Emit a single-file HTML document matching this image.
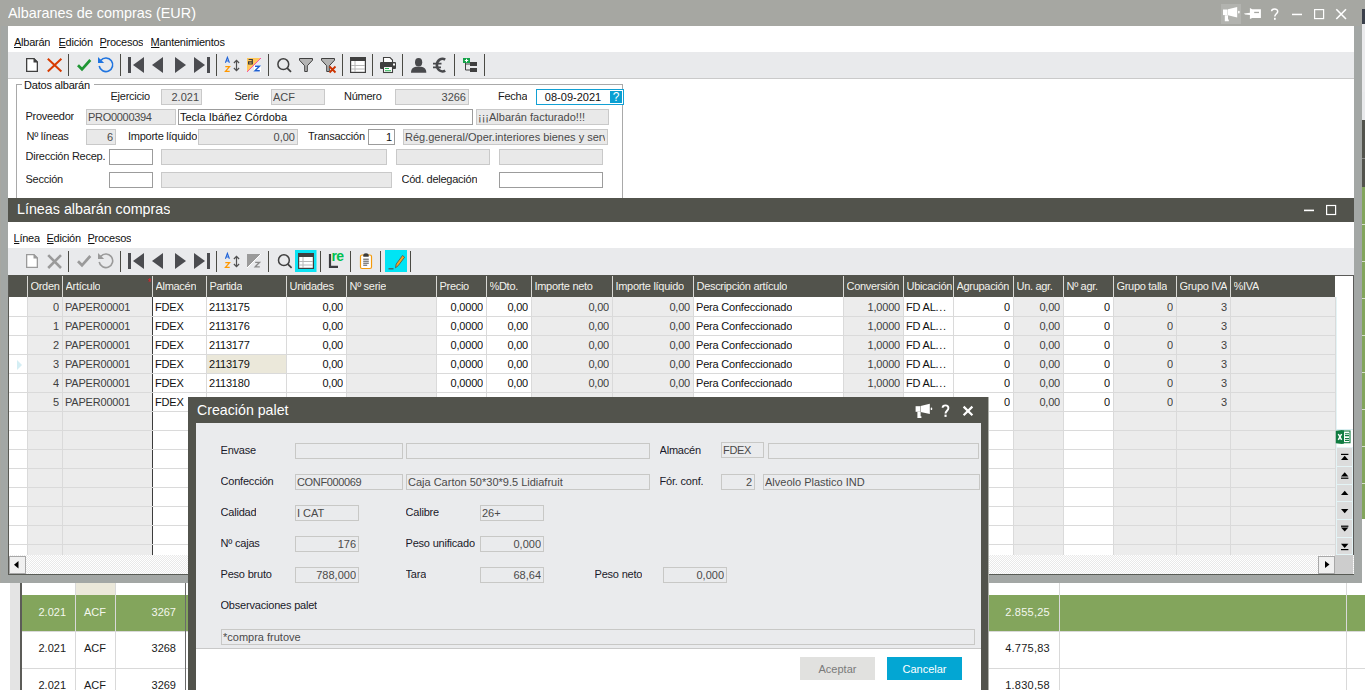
<!DOCTYPE html>
<html><head><meta charset="utf-8"><title>Albaranes de compras</title>
<style>
html,body{margin:0;padding:0;width:1365px;height:690px;overflow:hidden;background:#fff;}
body{position:relative;font-family:"Liberation Sans", sans-serif;}
body div, body svg{position:absolute;}
u{text-decoration:underline;text-underline-offset:1px;}
</style></head><body>
<div style="left:1362px;top:0px;width:3px;height:690px;background:#ffffff"></div>
<div style="left:1362px;top:0px;width:3px;height:9px;background:#a6a7a2"></div>
<div style="left:1362px;top:9px;width:3px;height:15px;background:#3b404b"></div>
<div style="left:1362px;top:24px;width:3px;height:68px;background:#ebebed"></div>
<div style="left:1362px;top:92px;width:3px;height:28px;background:#e9eaec"></div>
<div style="left:1362px;top:120px;width:3px;height:67px;background:#52534c"></div>
<div style="left:1362px;top:158px;width:3px;height:1px;background:#8a8a88"></div>
<div style="left:1362px;top:187px;width:3px;height:332px;background:#83a55c"></div>
<div style="left:1362px;top:224px;width:3px;height:1px;background:#d7dfcc"></div>
<div style="left:1362px;top:261px;width:3px;height:1px;background:#d7dfcc"></div>
<div style="left:1362px;top:298px;width:3px;height:1px;background:#d7dfcc"></div>
<div style="left:1362px;top:335px;width:3px;height:1px;background:#d7dfcc"></div>
<div style="left:1362px;top:372px;width:3px;height:1px;background:#d7dfcc"></div>
<div style="left:1362px;top:409px;width:3px;height:1px;background:#d7dfcc"></div>
<div style="left:1362px;top:446px;width:3px;height:1px;background:#d7dfcc"></div>
<div style="left:1362px;top:483px;width:3px;height:1px;background:#d7dfcc"></div>
<div style="left:0px;top:583px;width:1362px;height:107px;background:#ffffff"></div>
<div style="left:10px;top:582px;width:10px;height:108px;background:#e4e4e4"></div>
<div style="left:20px;top:582px;width:2px;height:108px;background:#5c5c58"></div>
<div style="left:75px;top:582px;width:40px;height:13px;background:#ebe8da"></div>
<div style="left:22px;top:595px;width:1343px;height:36px;background:#83a55c"></div>
<div style="left:22px;top:631px;width:1343px;height:1px;background:#d9d9d9"></div>
<div style="left:22px;top:668px;width:1343px;height:1px;background:#d9d9d9"></div>
<div style="left:75px;top:582px;width:1px;height:108px;background:#d9d9d9"></div>
<div style="left:115px;top:582px;width:1px;height:108px;background:#d9d9d9"></div>
<div style="left:1059px;top:582px;width:1px;height:108px;background:#d9d9d9"></div>
<div style="left:1346px;top:582px;width:1px;height:108px;background:#d9d9d9"></div>
<div style="left:185px;top:582px;width:1px;height:108px;background:#6a6a6a"></div>
<div style="left:22px;top:605.19px;width:44px;height:14px;line-height:14px;font-size:11px;color:#f4f7ee;text-align:right;white-space:nowrap;overflow:hidden;">2.021</div>
<div style="left:75px;top:605.19px;width:40px;height:14px;line-height:14px;font-size:11px;color:#f4f7ee;text-align:center;white-space:nowrap;overflow:hidden;">ACF</div>
<div style="left:115px;top:605.19px;width:61px;height:14px;line-height:14px;font-size:11px;color:#f4f7ee;text-align:right;white-space:nowrap;overflow:hidden;">3267</div>
<div style="left:989px;top:605.19px;width:61px;height:14px;line-height:14px;font-size:11px;color:#f4f7ee;text-align:right;white-space:nowrap;overflow:hidden;letter-spacing:0.25px;">2.855,25</div>
<div style="left:22px;top:641.19px;width:44px;height:14px;line-height:14px;font-size:11px;color:#1a1a1a;text-align:right;white-space:nowrap;overflow:hidden;">2.021</div>
<div style="left:75px;top:641.19px;width:40px;height:14px;line-height:14px;font-size:11px;color:#1a1a1a;text-align:center;white-space:nowrap;overflow:hidden;">ACF</div>
<div style="left:115px;top:641.19px;width:61px;height:14px;line-height:14px;font-size:11px;color:#1a1a1a;text-align:right;white-space:nowrap;overflow:hidden;">3268</div>
<div style="left:989px;top:641.19px;width:61px;height:14px;line-height:14px;font-size:11px;color:#1a1a1a;text-align:right;white-space:nowrap;overflow:hidden;letter-spacing:0.25px;">4.775,83</div>
<div style="left:22px;top:678.19px;width:44px;height:14px;line-height:14px;font-size:11px;color:#1a1a1a;text-align:right;white-space:nowrap;overflow:hidden;">2.021</div>
<div style="left:75px;top:678.19px;width:40px;height:14px;line-height:14px;font-size:11px;color:#1a1a1a;text-align:center;white-space:nowrap;overflow:hidden;">ACF</div>
<div style="left:115px;top:678.19px;width:61px;height:14px;line-height:14px;font-size:11px;color:#1a1a1a;text-align:right;white-space:nowrap;overflow:hidden;">3269</div>
<div style="left:989px;top:678.19px;width:61px;height:14px;line-height:14px;font-size:11px;color:#1a1a1a;text-align:right;white-space:nowrap;overflow:hidden;letter-spacing:0.25px;">1.830,58</div>
<div style="left:0px;top:0px;width:1362px;height:26px;background:#a6a7a2"></div>
<div style="left:0px;top:26px;width:1362px;height:557px;background:#a3a7a5"></div>
<div style="left:8px;top:26px;width:1346px;height:548px;background:#ffffff"></div>
<div style="left:0px;top:26px;width:1px;height:557px;background:#a6a7a2"></div>
<div style="left:8px;top:3.51px;white-space:nowrap;height:19px;line-height:19px;font-size:14.4px;color:#ffffff;text-align:left;white-space:nowrap;overflow:hidden;">Albaranes de compras (EUR)</div>
<div style="left:1221px;top:4px;width:20px;height:20px;background:#b2b3af"></div>
<div style="left:14px;top:35.19px;white-space:nowrap;height:14px;line-height:14px;font-size:11px;color:#101010;text-align:left;white-space:nowrap;overflow:hidden;letter-spacing:-0.25px;"><u>A</u>lbarán</div>
<div style="left:58.5px;top:35.19px;white-space:nowrap;height:14px;line-height:14px;font-size:11px;color:#101010;text-align:left;white-space:nowrap;overflow:hidden;letter-spacing:-0.25px;"><u>E</u>dición</div>
<div style="left:99.5px;top:35.19px;white-space:nowrap;height:14px;line-height:14px;font-size:11px;color:#101010;text-align:left;white-space:nowrap;overflow:hidden;letter-spacing:-0.25px;"><u>P</u>rocesos</div>
<div style="left:150.5px;top:35.19px;white-space:nowrap;height:14px;line-height:14px;font-size:11px;color:#101010;text-align:left;white-space:nowrap;overflow:hidden;letter-spacing:-0.25px;"><u>M</u>antenimientos</div>
<div style="left:8px;top:52px;width:1346px;height:26px;background:#e9eaec"></div>
<div style="left:8px;top:78px;width:1346px;height:1px;background:#cacaca"></div>
<div style="left:68px;top:54px;width:1px;height:22px;background:#4a4a44"></div>
<div style="left:120px;top:54px;width:1px;height:22px;background:#4a4a44"></div>
<div style="left:216px;top:54px;width:1px;height:22px;background:#4a4a44"></div>
<div style="left:268px;top:54px;width:1px;height:22px;background:#4a4a44"></div>
<div style="left:342px;top:54px;width:1px;height:22px;background:#4a4a44"></div>
<div style="left:372px;top:54px;width:1px;height:22px;background:#4a4a44"></div>
<div style="left:402px;top:54px;width:1px;height:22px;background:#4a4a44"></div>
<div style="left:454px;top:54px;width:1px;height:22px;background:#4a4a44"></div>
<div style="left:484px;top:54px;width:1px;height:22px;background:#4a4a44"></div>
<div style="left:16px;top:84px;width:605px;height:120px;border:1px solid #a9a9a9;border-bottom:none"></div>
<div style="left:22px;top:79px;width:72px;height:12px;background:#ffffff"></div>
<div style="left:24px;top:77.89px;white-space:nowrap;height:14px;line-height:14px;font-size:11px;color:#101010;text-align:left;white-space:nowrap;overflow:hidden;letter-spacing:-0.2px;">Datos albarán</div>
<div style="left:110.5px;top:89.19px;white-space:nowrap;height:14px;line-height:14px;font-size:11px;color:#1a1a1a;text-align:left;white-space:nowrap;overflow:hidden;letter-spacing:-0.25px;">Ejercicio</div>
<div style="left:161px;top:89px;width:41px;height:16px;background:#e9e9e9;border:1px solid #c9c9c9;box-sizing:border-box"></div>
<div style="left:163px;top:90.39px;width:36px;height:14px;line-height:14px;font-size:11px;color:#4a4a4a;text-align:right;white-space:nowrap;overflow:hidden;letter-spacing:0px;">2.021</div>
<div style="left:234.5px;top:89.19px;white-space:nowrap;height:14px;line-height:14px;font-size:11px;color:#1a1a1a;text-align:left;white-space:nowrap;overflow:hidden;letter-spacing:-0.25px;">Serie</div>
<div style="left:271px;top:89px;width:54px;height:16px;background:#e9e9e9;border:1px solid #c9c9c9;box-sizing:border-box"></div>
<div style="left:273px;top:90.39px;width:49px;height:14px;line-height:14px;font-size:11px;color:#4a4a4a;text-align:left;white-space:nowrap;overflow:hidden;letter-spacing:0px;">ACF</div>
<div style="left:344px;top:89.19px;white-space:nowrap;height:14px;line-height:14px;font-size:11px;color:#1a1a1a;text-align:left;white-space:nowrap;overflow:hidden;letter-spacing:-0.25px;">Número</div>
<div style="left:395px;top:89px;width:74px;height:16px;background:#e9e9e9;border:1px solid #c9c9c9;box-sizing:border-box"></div>
<div style="left:397px;top:90.39px;width:69px;height:14px;line-height:14px;font-size:11px;color:#4a4a4a;text-align:right;white-space:nowrap;overflow:hidden;letter-spacing:0px;">3266</div>
<div style="left:498px;top:89.19px;white-space:nowrap;height:14px;line-height:14px;font-size:11px;color:#1a1a1a;text-align:left;white-space:nowrap;overflow:hidden;letter-spacing:-0.25px;">Fecha</div>
<div style="left:536px;top:89px;width:88px;height:16px;background:#ffffff;border:1px solid #12a0d4;box-sizing:border-box"></div>
<div style="left:536px;top:89.59px;width:74px;height:14px;line-height:14px;font-size:11px;color:#101010;text-align:center;white-space:nowrap;overflow:hidden;letter-spacing:0px;">08-09-2021</div>
<div style="left:610px;top:91px;width:12px;height:12px;background:#0a9fd2"></div>
<div style="left:610px;top:88.84px;width:12px;height:16px;line-height:16px;font-size:12px;color:#ffffff;text-align:center;white-space:nowrap;overflow:hidden;">?</div>
<div style="left:25.5px;top:109.19px;white-space:nowrap;height:14px;line-height:14px;font-size:11px;color:#1a1a1a;text-align:left;white-space:nowrap;overflow:hidden;letter-spacing:-0.25px;">Proveedor</div>
<div style="left:86px;top:109px;width:90px;height:16px;background:#e9e9e9;border:1px solid #c9c9c9;box-sizing:border-box"></div>
<div style="left:88px;top:110.39px;width:85px;height:14px;line-height:14px;font-size:11px;color:#4a4a4a;text-align:left;white-space:nowrap;overflow:hidden;letter-spacing:-0.3px;">PRO0000394</div>
<div style="left:178px;top:109px;width:295px;height:16px;background:#ffffff;border:1px solid #9c9c9c;box-sizing:border-box"></div>
<div style="left:180px;top:110.39px;width:290px;height:14px;line-height:14px;font-size:11px;color:#101010;text-align:left;white-space:nowrap;overflow:hidden;letter-spacing:0px;">Tecla Ibáñez Córdoba</div>
<div style="left:476px;top:109px;width:133px;height:16px;background:#e9e9e9;border:1px solid #c9c9c9;box-sizing:border-box"></div>
<div style="left:478px;top:110.39px;width:128px;height:14px;line-height:14px;font-size:11px;color:#4a4a4a;text-align:left;white-space:nowrap;overflow:hidden;letter-spacing:0px;">¡¡¡Albarán facturado!!!</div>
<div style="left:26.5px;top:129.19px;white-space:nowrap;height:14px;line-height:14px;font-size:11px;color:#1a1a1a;text-align:left;white-space:nowrap;overflow:hidden;letter-spacing:-0.25px;">Nº líneas</div>
<div style="left:86px;top:129px;width:30px;height:16px;background:#e9e9e9;border:1px solid #c9c9c9;box-sizing:border-box"></div>
<div style="left:88px;top:130.39px;width:25px;height:14px;line-height:14px;font-size:11px;color:#4a4a4a;text-align:right;white-space:nowrap;overflow:hidden;letter-spacing:0px;">6</div>
<div style="left:128px;top:129.19px;white-space:nowrap;height:14px;line-height:14px;font-size:11px;color:#1a1a1a;text-align:left;white-space:nowrap;overflow:hidden;letter-spacing:-0.25px;">Importe líquido</div>
<div style="left:198px;top:129px;width:100px;height:16px;background:#e9e9e9;border:1px solid #c9c9c9;box-sizing:border-box"></div>
<div style="left:200px;top:130.39px;width:95px;height:14px;line-height:14px;font-size:11px;color:#4a4a4a;text-align:right;white-space:nowrap;overflow:hidden;letter-spacing:0px;">0,00</div>
<div style="left:308px;top:129.19px;white-space:nowrap;height:14px;line-height:14px;font-size:11px;color:#1a1a1a;text-align:left;white-space:nowrap;overflow:hidden;letter-spacing:-0.25px;">Transacción</div>
<div style="left:368px;top:129px;width:27px;height:16px;background:#ffffff;border:1px solid #9c9c9c;box-sizing:border-box"></div>
<div style="left:370px;top:130.39px;width:22px;height:14px;line-height:14px;font-size:11px;color:#101010;text-align:right;white-space:nowrap;overflow:hidden;letter-spacing:0px;">1</div>
<div style="left:403px;top:129px;width:205px;height:16px;background:#e9e9e9;border:1px solid #c9c9c9;box-sizing:border-box"></div>
<div style="left:405px;top:130.39px;width:200px;height:14px;line-height:14px;font-size:11px;color:#4a4a4a;text-align:left;white-space:nowrap;overflow:hidden;letter-spacing:0px;">Rég.general/Oper.interiores bienes y serv</div>
<div style="left:25.5px;top:149.19px;white-space:nowrap;height:14px;line-height:14px;font-size:11px;color:#1a1a1a;text-align:left;white-space:nowrap;overflow:hidden;letter-spacing:-0.25px;">Dirección Recep.</div>
<div style="left:109px;top:149px;width:44px;height:16px;background:#ffffff;border:1px solid #9c9c9c;box-sizing:border-box"></div>
<div style="left:161px;top:149px;width:226px;height:16px;background:#e9e9e9;border:1px solid #c9c9c9;box-sizing:border-box"></div>
<div style="left:396px;top:149px;width:94px;height:16px;background:#e9e9e9;border:1px solid #c9c9c9;box-sizing:border-box"></div>
<div style="left:499px;top:149px;width:104px;height:16px;background:#e9e9e9;border:1px solid #c9c9c9;box-sizing:border-box"></div>
<div style="left:25.5px;top:172.19px;white-space:nowrap;height:14px;line-height:14px;font-size:11px;color:#1a1a1a;text-align:left;white-space:nowrap;overflow:hidden;letter-spacing:-0.25px;">Sección</div>
<div style="left:109px;top:172px;width:44px;height:16px;background:#ffffff;border:1px solid #9c9c9c;box-sizing:border-box"></div>
<div style="left:161px;top:172px;width:231px;height:16px;background:#e9e9e9;border:1px solid #c9c9c9;box-sizing:border-box"></div>
<div style="left:401.5px;top:172.19px;white-space:nowrap;height:14px;line-height:14px;font-size:11px;color:#1a1a1a;text-align:left;white-space:nowrap;overflow:hidden;letter-spacing:-0.25px;">Cód. delegación</div>
<div style="left:499px;top:172px;width:104px;height:16px;background:#ffffff;border:1px solid #9c9c9c;box-sizing:border-box"></div>
<div style="left:8px;top:198px;width:1346px;height:24px;background:#52534c"></div>
<div style="left:17px;top:199.75px;white-space:nowrap;height:19px;line-height:19px;font-size:14.3px;color:#ffffff;text-align:left;white-space:nowrap;overflow:hidden;">Líneas albarán compras</div>
<div style="left:13.5px;top:230.69px;white-space:nowrap;height:14px;line-height:14px;font-size:11px;color:#101010;text-align:left;white-space:nowrap;overflow:hidden;letter-spacing:-0.25px;"><u>L</u>ínea</div>
<div style="left:46.5px;top:230.69px;white-space:nowrap;height:14px;line-height:14px;font-size:11px;color:#101010;text-align:left;white-space:nowrap;overflow:hidden;letter-spacing:-0.25px;"><u>E</u>dición</div>
<div style="left:87.5px;top:230.69px;white-space:nowrap;height:14px;line-height:14px;font-size:11px;color:#101010;text-align:left;white-space:nowrap;overflow:hidden;letter-spacing:-0.25px;"><u>P</u>rocesos</div>
<div style="left:8px;top:248px;width:1346px;height:27px;background:#e9eaec"></div>
<div style="left:68px;top:251px;width:1px;height:21px;background:#4a4a44"></div>
<div style="left:120px;top:251px;width:1px;height:21px;background:#4a4a44"></div>
<div style="left:216px;top:251px;width:1px;height:21px;background:#4a4a44"></div>
<div style="left:268px;top:251px;width:1px;height:21px;background:#4a4a44"></div>
<div style="left:320px;top:251px;width:1px;height:21px;background:#4a4a44"></div>
<div style="left:350px;top:251px;width:1px;height:21px;background:#4a4a44"></div>
<div style="left:380px;top:251px;width:1px;height:21px;background:#4a4a44"></div>
<div style="left:410px;top:251px;width:1px;height:21px;background:#4a4a44"></div>
<div style="left:8px;top:275px;width:1327px;height:22px;background:#52534c"></div>
<div style="left:28px;top:297px;width:35px;height:258px;background:#ececec"></div>
<div style="left:27px;top:276px;width:1px;height:21px;background:#d8d8d4"></div>
<div style="left:27px;top:297px;width:1px;height:258px;background:#dadada"></div>
<div style="left:30.5px;top:279.19px;white-space:nowrap;height:14px;line-height:14px;font-size:11px;color:#f2f2ec;text-align:left;white-space:nowrap;overflow:hidden;letter-spacing:-0.3px;">Orden</div>
<div style="left:63px;top:297px;width:90px;height:258px;background:#ececec"></div>
<div style="left:62px;top:276px;width:1px;height:21px;background:#d8d8d4"></div>
<div style="left:62px;top:297px;width:1px;height:258px;background:#dadada"></div>
<div style="left:65.5px;top:279.19px;white-space:nowrap;height:14px;line-height:14px;font-size:11px;color:#f2f2ec;text-align:left;white-space:nowrap;overflow:hidden;letter-spacing:-0.3px;">Artículo</div>
<div style="left:152px;top:276px;width:1px;height:21px;background:#d8d8d4"></div>
<div style="left:152px;top:297px;width:1px;height:258px;background:#dadada"></div>
<div style="left:155.5px;top:279.19px;white-space:nowrap;height:14px;line-height:14px;font-size:11px;color:#f2f2ec;text-align:left;white-space:nowrap;overflow:hidden;letter-spacing:-0.3px;">Almacén</div>
<div style="left:206px;top:276px;width:1px;height:21px;background:#d8d8d4"></div>
<div style="left:206px;top:297px;width:1px;height:258px;background:#dadada"></div>
<div style="left:209.5px;top:279.19px;white-space:nowrap;height:14px;line-height:14px;font-size:11px;color:#f2f2ec;text-align:left;white-space:nowrap;overflow:hidden;letter-spacing:-0.3px;">Partida</div>
<div style="left:286px;top:276px;width:1px;height:21px;background:#d8d8d4"></div>
<div style="left:286px;top:297px;width:1px;height:258px;background:#dadada"></div>
<div style="left:289.5px;top:279.19px;white-space:nowrap;height:14px;line-height:14px;font-size:11px;color:#f2f2ec;text-align:left;white-space:nowrap;overflow:hidden;letter-spacing:-0.3px;">Unidades</div>
<div style="left:347px;top:297px;width:90px;height:258px;background:#ececec"></div>
<div style="left:346px;top:276px;width:1px;height:21px;background:#d8d8d4"></div>
<div style="left:346px;top:297px;width:1px;height:258px;background:#dadada"></div>
<div style="left:349.5px;top:279.19px;white-space:nowrap;height:14px;line-height:14px;font-size:11px;color:#f2f2ec;text-align:left;white-space:nowrap;overflow:hidden;letter-spacing:-0.3px;">Nº serie</div>
<div style="left:436px;top:276px;width:1px;height:21px;background:#d8d8d4"></div>
<div style="left:436px;top:297px;width:1px;height:258px;background:#dadada"></div>
<div style="left:439.5px;top:279.19px;white-space:nowrap;height:14px;line-height:14px;font-size:11px;color:#f2f2ec;text-align:left;white-space:nowrap;overflow:hidden;letter-spacing:-0.3px;">Precio</div>
<div style="left:486px;top:276px;width:1px;height:21px;background:#d8d8d4"></div>
<div style="left:486px;top:297px;width:1px;height:258px;background:#dadada"></div>
<div style="left:489.5px;top:279.19px;white-space:nowrap;height:14px;line-height:14px;font-size:11px;color:#f2f2ec;text-align:left;white-space:nowrap;overflow:hidden;letter-spacing:-0.3px;">%Dto.</div>
<div style="left:532px;top:297px;width:81px;height:258px;background:#ececec"></div>
<div style="left:531px;top:276px;width:1px;height:21px;background:#d8d8d4"></div>
<div style="left:531px;top:297px;width:1px;height:258px;background:#dadada"></div>
<div style="left:534.5px;top:279.19px;white-space:nowrap;height:14px;line-height:14px;font-size:11px;color:#f2f2ec;text-align:left;white-space:nowrap;overflow:hidden;letter-spacing:-0.3px;">Importe neto</div>
<div style="left:613px;top:297px;width:81px;height:258px;background:#ececec"></div>
<div style="left:612px;top:276px;width:1px;height:21px;background:#d8d8d4"></div>
<div style="left:612px;top:297px;width:1px;height:258px;background:#dadada"></div>
<div style="left:615.5px;top:279.19px;white-space:nowrap;height:14px;line-height:14px;font-size:11px;color:#f2f2ec;text-align:left;white-space:nowrap;overflow:hidden;letter-spacing:-0.3px;">Importe líquido</div>
<div style="left:693px;top:276px;width:1px;height:21px;background:#d8d8d4"></div>
<div style="left:693px;top:297px;width:1px;height:258px;background:#dadada"></div>
<div style="left:696.5px;top:279.19px;white-space:nowrap;height:14px;line-height:14px;font-size:11px;color:#f2f2ec;text-align:left;white-space:nowrap;overflow:hidden;letter-spacing:-0.3px;">Descripción artículo</div>
<div style="left:844px;top:297px;width:60px;height:258px;background:#ececec"></div>
<div style="left:843px;top:276px;width:1px;height:21px;background:#d8d8d4"></div>
<div style="left:843px;top:297px;width:1px;height:258px;background:#dadada"></div>
<div style="left:846.5px;top:279.19px;white-space:nowrap;height:14px;line-height:14px;font-size:11px;color:#f2f2ec;text-align:left;white-space:nowrap;overflow:hidden;letter-spacing:-0.3px;">Conversión</div>
<div style="left:903px;top:276px;width:1px;height:21px;background:#d8d8d4"></div>
<div style="left:903px;top:297px;width:1px;height:258px;background:#dadada"></div>
<div style="left:906.5px;top:279.19px;white-space:nowrap;height:14px;line-height:14px;font-size:11px;color:#f2f2ec;text-align:left;white-space:nowrap;overflow:hidden;letter-spacing:-0.3px;">Ubicación</div>
<div style="left:953px;top:276px;width:1px;height:21px;background:#d8d8d4"></div>
<div style="left:953px;top:297px;width:1px;height:258px;background:#dadada"></div>
<div style="left:956.5px;top:279.19px;white-space:nowrap;height:14px;line-height:14px;font-size:11px;color:#f2f2ec;text-align:left;white-space:nowrap;overflow:hidden;letter-spacing:-0.3px;">Agrupación</div>
<div style="left:1014px;top:297px;width:50px;height:258px;background:#ececec"></div>
<div style="left:1013px;top:276px;width:1px;height:21px;background:#d8d8d4"></div>
<div style="left:1013px;top:297px;width:1px;height:258px;background:#dadada"></div>
<div style="left:1016.5px;top:279.19px;white-space:nowrap;height:14px;line-height:14px;font-size:11px;color:#f2f2ec;text-align:left;white-space:nowrap;overflow:hidden;letter-spacing:-0.3px;">Un. agr.</div>
<div style="left:1063px;top:276px;width:1px;height:21px;background:#d8d8d4"></div>
<div style="left:1063px;top:297px;width:1px;height:258px;background:#dadada"></div>
<div style="left:1066.5px;top:279.19px;white-space:nowrap;height:14px;line-height:14px;font-size:11px;color:#f2f2ec;text-align:left;white-space:nowrap;overflow:hidden;letter-spacing:-0.3px;">Nº agr.</div>
<div style="left:1114px;top:297px;width:63px;height:258px;background:#ececec"></div>
<div style="left:1113px;top:276px;width:1px;height:21px;background:#d8d8d4"></div>
<div style="left:1113px;top:297px;width:1px;height:258px;background:#dadada"></div>
<div style="left:1116.5px;top:279.19px;white-space:nowrap;height:14px;line-height:14px;font-size:11px;color:#f2f2ec;text-align:left;white-space:nowrap;overflow:hidden;letter-spacing:-0.3px;">Grupo talla</div>
<div style="left:1177px;top:297px;width:54px;height:258px;background:#ececec"></div>
<div style="left:1176px;top:276px;width:1px;height:21px;background:#d8d8d4"></div>
<div style="left:1176px;top:297px;width:1px;height:258px;background:#dadada"></div>
<div style="left:1179.5px;top:279.19px;white-space:nowrap;height:14px;line-height:14px;font-size:11px;color:#f2f2ec;text-align:left;white-space:nowrap;overflow:hidden;letter-spacing:-0.3px;">Grupo IVA</div>
<div style="left:1231px;top:297px;width:105px;height:258px;background:#ececec"></div>
<div style="left:1230px;top:276px;width:1px;height:21px;background:#d8d8d4"></div>
<div style="left:1230px;top:297px;width:1px;height:258px;background:#dadada"></div>
<div style="left:1233.5px;top:279.19px;white-space:nowrap;height:14px;line-height:14px;font-size:11px;color:#f2f2ec;text-align:left;white-space:nowrap;overflow:hidden;letter-spacing:-0.3px;">%IVA</div>
<div style="left:152px;top:297px;width:1px;height:258px;background:#3c3c3c"></div>
<div style="left:147.5px;top:275.54px;white-space:nowrap;height:13px;line-height:13px;font-size:10px;color:#e0202a;text-align:left;white-space:nowrap;overflow:hidden;">*</div>
<div style="left:1335px;top:297px;width:1px;height:258px;background:#dadada"></div>
<div style="left:8px;top:316px;width:1327px;height:1px;background:#dadada"></div>
<div style="left:8px;top:335px;width:1327px;height:1px;background:#dadada"></div>
<div style="left:8px;top:354px;width:1327px;height:1px;background:#dadada"></div>
<div style="left:8px;top:373px;width:1327px;height:1px;background:#dadada"></div>
<div style="left:8px;top:392px;width:1327px;height:1px;background:#dadada"></div>
<div style="left:8px;top:411px;width:1327px;height:1px;background:#dadada"></div>
<div style="left:8px;top:430px;width:1327px;height:1px;background:#dadada"></div>
<div style="left:8px;top:449px;width:1327px;height:1px;background:#dadada"></div>
<div style="left:8px;top:468px;width:1327px;height:1px;background:#dadada"></div>
<div style="left:8px;top:487px;width:1327px;height:1px;background:#dadada"></div>
<div style="left:8px;top:506px;width:1327px;height:1px;background:#dadada"></div>
<div style="left:8px;top:525px;width:1327px;height:1px;background:#dadada"></div>
<div style="left:8px;top:544px;width:1327px;height:1px;background:#dadada"></div>
<div style="left:8px;top:563px;width:1327px;height:1px;background:#dadada"></div>
<div style="left:207px;top:355px;width:79px;height:18px;background:#ebe8da"></div>
<svg style="left:17px;top:360px" width="6" height="10"><path d="M0 0 L5 5 L0 10Z" fill="#d4eef4"/></svg>
<div style="left:28px;top:300.19px;width:31px;height:14px;line-height:14px;font-size:11px;color:#404040;text-align:right;white-space:nowrap;overflow:hidden;letter-spacing:-0.2px;">0</div>
<div style="left:65px;top:300.19px;white-space:nowrap;height:14px;line-height:14px;font-size:11px;color:#404040;text-align:left;white-space:nowrap;overflow:hidden;letter-spacing:-0.2px;">PAPER00001</div>
<div style="left:155px;top:300.19px;white-space:nowrap;height:14px;line-height:14px;font-size:11px;color:#101010;text-align:left;white-space:nowrap;overflow:hidden;letter-spacing:-0.2px;">FDEX</div>
<div style="left:209px;top:300.19px;white-space:nowrap;height:14px;line-height:14px;font-size:11px;color:#101010;text-align:left;white-space:nowrap;overflow:hidden;letter-spacing:-0.2px;">2113175</div>
<div style="left:287px;top:300.19px;width:56px;height:14px;line-height:14px;font-size:11px;color:#101010;text-align:right;white-space:nowrap;overflow:hidden;letter-spacing:-0.2px;">0,00</div>
<div style="left:437px;top:300.19px;width:46px;height:14px;line-height:14px;font-size:11px;color:#101010;text-align:right;white-space:nowrap;overflow:hidden;letter-spacing:-0.2px;">0,0000</div>
<div style="left:487px;top:300.19px;width:41px;height:14px;line-height:14px;font-size:11px;color:#101010;text-align:right;white-space:nowrap;overflow:hidden;letter-spacing:-0.2px;">0,00</div>
<div style="left:532px;top:300.19px;width:77px;height:14px;line-height:14px;font-size:11px;color:#404040;text-align:right;white-space:nowrap;overflow:hidden;letter-spacing:-0.2px;">0,00</div>
<div style="left:613px;top:300.19px;width:77px;height:14px;line-height:14px;font-size:11px;color:#404040;text-align:right;white-space:nowrap;overflow:hidden;letter-spacing:-0.2px;">0,00</div>
<div style="left:696px;top:300.19px;white-space:nowrap;height:14px;line-height:14px;font-size:11px;color:#101010;text-align:left;white-space:nowrap;overflow:hidden;letter-spacing:-0.2px;">Pera Confeccionado</div>
<div style="left:844px;top:300.19px;width:56px;height:14px;line-height:14px;font-size:11px;color:#404040;text-align:right;white-space:nowrap;overflow:hidden;letter-spacing:-0.2px;">1,0000</div>
<div style="left:906px;top:300.19px;white-space:nowrap;height:14px;line-height:14px;font-size:11px;color:#101010;text-align:left;white-space:nowrap;overflow:hidden;letter-spacing:-0.2px;">FD AL<span style="letter-spacing:0.6px">...</span></div>
<div style="left:954px;top:300.19px;width:56px;height:14px;line-height:14px;font-size:11px;color:#101010;text-align:right;white-space:nowrap;overflow:hidden;letter-spacing:-0.2px;">0</div>
<div style="left:1014px;top:300.19px;width:46px;height:14px;line-height:14px;font-size:11px;color:#404040;text-align:right;white-space:nowrap;overflow:hidden;letter-spacing:-0.2px;">0,00</div>
<div style="left:1064px;top:300.19px;width:46px;height:14px;line-height:14px;font-size:11px;color:#101010;text-align:right;white-space:nowrap;overflow:hidden;letter-spacing:-0.2px;">0</div>
<div style="left:1114px;top:300.19px;width:59px;height:14px;line-height:14px;font-size:11px;color:#404040;text-align:right;white-space:nowrap;overflow:hidden;letter-spacing:-0.2px;">0</div>
<div style="left:1177px;top:300.19px;width:50px;height:14px;line-height:14px;font-size:11px;color:#404040;text-align:right;white-space:nowrap;overflow:hidden;letter-spacing:-0.2px;">3</div>
<div style="left:28px;top:319.19px;width:31px;height:14px;line-height:14px;font-size:11px;color:#404040;text-align:right;white-space:nowrap;overflow:hidden;letter-spacing:-0.2px;">1</div>
<div style="left:65px;top:319.19px;white-space:nowrap;height:14px;line-height:14px;font-size:11px;color:#404040;text-align:left;white-space:nowrap;overflow:hidden;letter-spacing:-0.2px;">PAPER00001</div>
<div style="left:155px;top:319.19px;white-space:nowrap;height:14px;line-height:14px;font-size:11px;color:#101010;text-align:left;white-space:nowrap;overflow:hidden;letter-spacing:-0.2px;">FDEX</div>
<div style="left:209px;top:319.19px;white-space:nowrap;height:14px;line-height:14px;font-size:11px;color:#101010;text-align:left;white-space:nowrap;overflow:hidden;letter-spacing:-0.2px;">2113176</div>
<div style="left:287px;top:319.19px;width:56px;height:14px;line-height:14px;font-size:11px;color:#101010;text-align:right;white-space:nowrap;overflow:hidden;letter-spacing:-0.2px;">0,00</div>
<div style="left:437px;top:319.19px;width:46px;height:14px;line-height:14px;font-size:11px;color:#101010;text-align:right;white-space:nowrap;overflow:hidden;letter-spacing:-0.2px;">0,0000</div>
<div style="left:487px;top:319.19px;width:41px;height:14px;line-height:14px;font-size:11px;color:#101010;text-align:right;white-space:nowrap;overflow:hidden;letter-spacing:-0.2px;">0,00</div>
<div style="left:532px;top:319.19px;width:77px;height:14px;line-height:14px;font-size:11px;color:#404040;text-align:right;white-space:nowrap;overflow:hidden;letter-spacing:-0.2px;">0,00</div>
<div style="left:613px;top:319.19px;width:77px;height:14px;line-height:14px;font-size:11px;color:#404040;text-align:right;white-space:nowrap;overflow:hidden;letter-spacing:-0.2px;">0,00</div>
<div style="left:696px;top:319.19px;white-space:nowrap;height:14px;line-height:14px;font-size:11px;color:#101010;text-align:left;white-space:nowrap;overflow:hidden;letter-spacing:-0.2px;">Pera Confeccionado</div>
<div style="left:844px;top:319.19px;width:56px;height:14px;line-height:14px;font-size:11px;color:#404040;text-align:right;white-space:nowrap;overflow:hidden;letter-spacing:-0.2px;">1,0000</div>
<div style="left:906px;top:319.19px;white-space:nowrap;height:14px;line-height:14px;font-size:11px;color:#101010;text-align:left;white-space:nowrap;overflow:hidden;letter-spacing:-0.2px;">FD AL<span style="letter-spacing:0.6px">...</span></div>
<div style="left:954px;top:319.19px;width:56px;height:14px;line-height:14px;font-size:11px;color:#101010;text-align:right;white-space:nowrap;overflow:hidden;letter-spacing:-0.2px;">0</div>
<div style="left:1014px;top:319.19px;width:46px;height:14px;line-height:14px;font-size:11px;color:#404040;text-align:right;white-space:nowrap;overflow:hidden;letter-spacing:-0.2px;">0,00</div>
<div style="left:1064px;top:319.19px;width:46px;height:14px;line-height:14px;font-size:11px;color:#101010;text-align:right;white-space:nowrap;overflow:hidden;letter-spacing:-0.2px;">0</div>
<div style="left:1114px;top:319.19px;width:59px;height:14px;line-height:14px;font-size:11px;color:#404040;text-align:right;white-space:nowrap;overflow:hidden;letter-spacing:-0.2px;">0</div>
<div style="left:1177px;top:319.19px;width:50px;height:14px;line-height:14px;font-size:11px;color:#404040;text-align:right;white-space:nowrap;overflow:hidden;letter-spacing:-0.2px;">3</div>
<div style="left:28px;top:338.19px;width:31px;height:14px;line-height:14px;font-size:11px;color:#404040;text-align:right;white-space:nowrap;overflow:hidden;letter-spacing:-0.2px;">2</div>
<div style="left:65px;top:338.19px;white-space:nowrap;height:14px;line-height:14px;font-size:11px;color:#404040;text-align:left;white-space:nowrap;overflow:hidden;letter-spacing:-0.2px;">PAPER00001</div>
<div style="left:155px;top:338.19px;white-space:nowrap;height:14px;line-height:14px;font-size:11px;color:#101010;text-align:left;white-space:nowrap;overflow:hidden;letter-spacing:-0.2px;">FDEX</div>
<div style="left:209px;top:338.19px;white-space:nowrap;height:14px;line-height:14px;font-size:11px;color:#101010;text-align:left;white-space:nowrap;overflow:hidden;letter-spacing:-0.2px;">2113177</div>
<div style="left:287px;top:338.19px;width:56px;height:14px;line-height:14px;font-size:11px;color:#101010;text-align:right;white-space:nowrap;overflow:hidden;letter-spacing:-0.2px;">0,00</div>
<div style="left:437px;top:338.19px;width:46px;height:14px;line-height:14px;font-size:11px;color:#101010;text-align:right;white-space:nowrap;overflow:hidden;letter-spacing:-0.2px;">0,0000</div>
<div style="left:487px;top:338.19px;width:41px;height:14px;line-height:14px;font-size:11px;color:#101010;text-align:right;white-space:nowrap;overflow:hidden;letter-spacing:-0.2px;">0,00</div>
<div style="left:532px;top:338.19px;width:77px;height:14px;line-height:14px;font-size:11px;color:#404040;text-align:right;white-space:nowrap;overflow:hidden;letter-spacing:-0.2px;">0,00</div>
<div style="left:613px;top:338.19px;width:77px;height:14px;line-height:14px;font-size:11px;color:#404040;text-align:right;white-space:nowrap;overflow:hidden;letter-spacing:-0.2px;">0,00</div>
<div style="left:696px;top:338.19px;white-space:nowrap;height:14px;line-height:14px;font-size:11px;color:#101010;text-align:left;white-space:nowrap;overflow:hidden;letter-spacing:-0.2px;">Pera Confeccionado</div>
<div style="left:844px;top:338.19px;width:56px;height:14px;line-height:14px;font-size:11px;color:#404040;text-align:right;white-space:nowrap;overflow:hidden;letter-spacing:-0.2px;">1,0000</div>
<div style="left:906px;top:338.19px;white-space:nowrap;height:14px;line-height:14px;font-size:11px;color:#101010;text-align:left;white-space:nowrap;overflow:hidden;letter-spacing:-0.2px;">FD AL<span style="letter-spacing:0.6px">...</span></div>
<div style="left:954px;top:338.19px;width:56px;height:14px;line-height:14px;font-size:11px;color:#101010;text-align:right;white-space:nowrap;overflow:hidden;letter-spacing:-0.2px;">0</div>
<div style="left:1014px;top:338.19px;width:46px;height:14px;line-height:14px;font-size:11px;color:#404040;text-align:right;white-space:nowrap;overflow:hidden;letter-spacing:-0.2px;">0,00</div>
<div style="left:1064px;top:338.19px;width:46px;height:14px;line-height:14px;font-size:11px;color:#101010;text-align:right;white-space:nowrap;overflow:hidden;letter-spacing:-0.2px;">0</div>
<div style="left:1114px;top:338.19px;width:59px;height:14px;line-height:14px;font-size:11px;color:#404040;text-align:right;white-space:nowrap;overflow:hidden;letter-spacing:-0.2px;">0</div>
<div style="left:1177px;top:338.19px;width:50px;height:14px;line-height:14px;font-size:11px;color:#404040;text-align:right;white-space:nowrap;overflow:hidden;letter-spacing:-0.2px;">3</div>
<div style="left:28px;top:357.19px;width:31px;height:14px;line-height:14px;font-size:11px;color:#404040;text-align:right;white-space:nowrap;overflow:hidden;letter-spacing:-0.2px;">3</div>
<div style="left:65px;top:357.19px;white-space:nowrap;height:14px;line-height:14px;font-size:11px;color:#404040;text-align:left;white-space:nowrap;overflow:hidden;letter-spacing:-0.2px;">PAPER00001</div>
<div style="left:155px;top:357.19px;white-space:nowrap;height:14px;line-height:14px;font-size:11px;color:#101010;text-align:left;white-space:nowrap;overflow:hidden;letter-spacing:-0.2px;">FDEX</div>
<div style="left:209px;top:357.19px;white-space:nowrap;height:14px;line-height:14px;font-size:11px;color:#101010;text-align:left;white-space:nowrap;overflow:hidden;letter-spacing:-0.2px;">2113179</div>
<div style="left:287px;top:357.19px;width:56px;height:14px;line-height:14px;font-size:11px;color:#101010;text-align:right;white-space:nowrap;overflow:hidden;letter-spacing:-0.2px;">0,00</div>
<div style="left:437px;top:357.19px;width:46px;height:14px;line-height:14px;font-size:11px;color:#101010;text-align:right;white-space:nowrap;overflow:hidden;letter-spacing:-0.2px;">0,0000</div>
<div style="left:487px;top:357.19px;width:41px;height:14px;line-height:14px;font-size:11px;color:#101010;text-align:right;white-space:nowrap;overflow:hidden;letter-spacing:-0.2px;">0,00</div>
<div style="left:532px;top:357.19px;width:77px;height:14px;line-height:14px;font-size:11px;color:#404040;text-align:right;white-space:nowrap;overflow:hidden;letter-spacing:-0.2px;">0,00</div>
<div style="left:613px;top:357.19px;width:77px;height:14px;line-height:14px;font-size:11px;color:#404040;text-align:right;white-space:nowrap;overflow:hidden;letter-spacing:-0.2px;">0,00</div>
<div style="left:696px;top:357.19px;white-space:nowrap;height:14px;line-height:14px;font-size:11px;color:#101010;text-align:left;white-space:nowrap;overflow:hidden;letter-spacing:-0.2px;">Pera Confeccionado</div>
<div style="left:844px;top:357.19px;width:56px;height:14px;line-height:14px;font-size:11px;color:#404040;text-align:right;white-space:nowrap;overflow:hidden;letter-spacing:-0.2px;">1,0000</div>
<div style="left:906px;top:357.19px;white-space:nowrap;height:14px;line-height:14px;font-size:11px;color:#101010;text-align:left;white-space:nowrap;overflow:hidden;letter-spacing:-0.2px;">FD AL<span style="letter-spacing:0.6px">...</span></div>
<div style="left:954px;top:357.19px;width:56px;height:14px;line-height:14px;font-size:11px;color:#101010;text-align:right;white-space:nowrap;overflow:hidden;letter-spacing:-0.2px;">0</div>
<div style="left:1014px;top:357.19px;width:46px;height:14px;line-height:14px;font-size:11px;color:#404040;text-align:right;white-space:nowrap;overflow:hidden;letter-spacing:-0.2px;">0,00</div>
<div style="left:1064px;top:357.19px;width:46px;height:14px;line-height:14px;font-size:11px;color:#101010;text-align:right;white-space:nowrap;overflow:hidden;letter-spacing:-0.2px;">0</div>
<div style="left:1114px;top:357.19px;width:59px;height:14px;line-height:14px;font-size:11px;color:#404040;text-align:right;white-space:nowrap;overflow:hidden;letter-spacing:-0.2px;">0</div>
<div style="left:1177px;top:357.19px;width:50px;height:14px;line-height:14px;font-size:11px;color:#404040;text-align:right;white-space:nowrap;overflow:hidden;letter-spacing:-0.2px;">3</div>
<div style="left:28px;top:376.19px;width:31px;height:14px;line-height:14px;font-size:11px;color:#404040;text-align:right;white-space:nowrap;overflow:hidden;letter-spacing:-0.2px;">4</div>
<div style="left:65px;top:376.19px;white-space:nowrap;height:14px;line-height:14px;font-size:11px;color:#404040;text-align:left;white-space:nowrap;overflow:hidden;letter-spacing:-0.2px;">PAPER00001</div>
<div style="left:155px;top:376.19px;white-space:nowrap;height:14px;line-height:14px;font-size:11px;color:#101010;text-align:left;white-space:nowrap;overflow:hidden;letter-spacing:-0.2px;">FDEX</div>
<div style="left:209px;top:376.19px;white-space:nowrap;height:14px;line-height:14px;font-size:11px;color:#101010;text-align:left;white-space:nowrap;overflow:hidden;letter-spacing:-0.2px;">2113180</div>
<div style="left:287px;top:376.19px;width:56px;height:14px;line-height:14px;font-size:11px;color:#101010;text-align:right;white-space:nowrap;overflow:hidden;letter-spacing:-0.2px;">0,00</div>
<div style="left:437px;top:376.19px;width:46px;height:14px;line-height:14px;font-size:11px;color:#101010;text-align:right;white-space:nowrap;overflow:hidden;letter-spacing:-0.2px;">0,0000</div>
<div style="left:487px;top:376.19px;width:41px;height:14px;line-height:14px;font-size:11px;color:#101010;text-align:right;white-space:nowrap;overflow:hidden;letter-spacing:-0.2px;">0,00</div>
<div style="left:532px;top:376.19px;width:77px;height:14px;line-height:14px;font-size:11px;color:#404040;text-align:right;white-space:nowrap;overflow:hidden;letter-spacing:-0.2px;">0,00</div>
<div style="left:613px;top:376.19px;width:77px;height:14px;line-height:14px;font-size:11px;color:#404040;text-align:right;white-space:nowrap;overflow:hidden;letter-spacing:-0.2px;">0,00</div>
<div style="left:696px;top:376.19px;white-space:nowrap;height:14px;line-height:14px;font-size:11px;color:#101010;text-align:left;white-space:nowrap;overflow:hidden;letter-spacing:-0.2px;">Pera Confeccionado</div>
<div style="left:844px;top:376.19px;width:56px;height:14px;line-height:14px;font-size:11px;color:#404040;text-align:right;white-space:nowrap;overflow:hidden;letter-spacing:-0.2px;">1,0000</div>
<div style="left:906px;top:376.19px;white-space:nowrap;height:14px;line-height:14px;font-size:11px;color:#101010;text-align:left;white-space:nowrap;overflow:hidden;letter-spacing:-0.2px;">FD AL<span style="letter-spacing:0.6px">...</span></div>
<div style="left:954px;top:376.19px;width:56px;height:14px;line-height:14px;font-size:11px;color:#101010;text-align:right;white-space:nowrap;overflow:hidden;letter-spacing:-0.2px;">0</div>
<div style="left:1014px;top:376.19px;width:46px;height:14px;line-height:14px;font-size:11px;color:#404040;text-align:right;white-space:nowrap;overflow:hidden;letter-spacing:-0.2px;">0,00</div>
<div style="left:1064px;top:376.19px;width:46px;height:14px;line-height:14px;font-size:11px;color:#101010;text-align:right;white-space:nowrap;overflow:hidden;letter-spacing:-0.2px;">0</div>
<div style="left:1114px;top:376.19px;width:59px;height:14px;line-height:14px;font-size:11px;color:#404040;text-align:right;white-space:nowrap;overflow:hidden;letter-spacing:-0.2px;">0</div>
<div style="left:1177px;top:376.19px;width:50px;height:14px;line-height:14px;font-size:11px;color:#404040;text-align:right;white-space:nowrap;overflow:hidden;letter-spacing:-0.2px;">3</div>
<div style="left:28px;top:395.19px;width:31px;height:14px;line-height:14px;font-size:11px;color:#404040;text-align:right;white-space:nowrap;overflow:hidden;letter-spacing:-0.2px;">5</div>
<div style="left:65px;top:395.19px;white-space:nowrap;height:14px;line-height:14px;font-size:11px;color:#404040;text-align:left;white-space:nowrap;overflow:hidden;letter-spacing:-0.2px;">PAPER00001</div>
<div style="left:155px;top:395.19px;white-space:nowrap;height:14px;line-height:14px;font-size:11px;color:#101010;text-align:left;white-space:nowrap;overflow:hidden;letter-spacing:-0.2px;">FDEX</div>
<div style="left:287px;top:395.19px;width:56px;height:14px;line-height:14px;font-size:11px;color:#101010;text-align:right;white-space:nowrap;overflow:hidden;letter-spacing:-0.2px;">0,00</div>
<div style="left:437px;top:395.19px;width:46px;height:14px;line-height:14px;font-size:11px;color:#101010;text-align:right;white-space:nowrap;overflow:hidden;letter-spacing:-0.2px;">0,0000</div>
<div style="left:487px;top:395.19px;width:41px;height:14px;line-height:14px;font-size:11px;color:#101010;text-align:right;white-space:nowrap;overflow:hidden;letter-spacing:-0.2px;">0,00</div>
<div style="left:532px;top:395.19px;width:77px;height:14px;line-height:14px;font-size:11px;color:#404040;text-align:right;white-space:nowrap;overflow:hidden;letter-spacing:-0.2px;">0,00</div>
<div style="left:613px;top:395.19px;width:77px;height:14px;line-height:14px;font-size:11px;color:#404040;text-align:right;white-space:nowrap;overflow:hidden;letter-spacing:-0.2px;">0,00</div>
<div style="left:696px;top:395.19px;white-space:nowrap;height:14px;line-height:14px;font-size:11px;color:#101010;text-align:left;white-space:nowrap;overflow:hidden;letter-spacing:-0.2px;">Pera Confeccionado</div>
<div style="left:844px;top:395.19px;width:56px;height:14px;line-height:14px;font-size:11px;color:#404040;text-align:right;white-space:nowrap;overflow:hidden;letter-spacing:-0.2px;">1,0000</div>
<div style="left:906px;top:395.19px;white-space:nowrap;height:14px;line-height:14px;font-size:11px;color:#101010;text-align:left;white-space:nowrap;overflow:hidden;letter-spacing:-0.2px;">FD AL<span style="letter-spacing:0.6px">...</span></div>
<div style="left:954px;top:395.19px;width:56px;height:14px;line-height:14px;font-size:11px;color:#101010;text-align:right;white-space:nowrap;overflow:hidden;letter-spacing:-0.2px;">0</div>
<div style="left:1014px;top:395.19px;width:46px;height:14px;line-height:14px;font-size:11px;color:#404040;text-align:right;white-space:nowrap;overflow:hidden;letter-spacing:-0.2px;">0,00</div>
<div style="left:1064px;top:395.19px;width:46px;height:14px;line-height:14px;font-size:11px;color:#101010;text-align:right;white-space:nowrap;overflow:hidden;letter-spacing:-0.2px;">0</div>
<div style="left:1114px;top:395.19px;width:59px;height:14px;line-height:14px;font-size:11px;color:#404040;text-align:right;white-space:nowrap;overflow:hidden;letter-spacing:-0.2px;">0</div>
<div style="left:1177px;top:395.19px;width:50px;height:14px;line-height:14px;font-size:11px;color:#404040;text-align:right;white-space:nowrap;overflow:hidden;letter-spacing:-0.2px;">3</div>
<div style="left:1336px;top:297px;width:18px;height:258px;background:#ffffff"></div>
<div style="left:1336px;top:297px;width:17px;height:258px;background:#e4f4f6"></div>
<div style="left:1337px;top:297px;width:16px;height:150px;background:#ffffff"></div>
<div style="left:1336px;top:429px;width:17px;height:1px;background:#d8eef0"></div>
<div style="left:1337px;top:448px;width:15px;height:17.5px;background:#dcdcdc"></div>
<div style="left:1337px;top:466.5px;width:15px;height:17.0px;background:#dcdcdc"></div>
<div style="left:1337px;top:484.5px;width:15px;height:16.9px;background:#dcdcdc"></div>
<div style="left:1337px;top:502.4px;width:15px;height:17.0px;background:#dcdcdc"></div>
<div style="left:1337px;top:520.4px;width:15px;height:17.0px;background:#dcdcdc"></div>
<div style="left:1337px;top:538.4px;width:15px;height:15.8px;background:#dcdcdc"></div>
<div style="left:1353px;top:275px;width:1px;height:300px;background:#5a5a58"></div>
<div style="left:1335px;top:275px;width:19px;height:1px;background:#5a5a58"></div>
<div style="left:8px;top:555px;width:1346px;height:20px;background:repeating-conic-gradient(#ffffff 0% 25%, #e9e9e9 0% 50%) 0 0/2px 2px"></div>
<div style="left:9px;top:556px;width:17px;height:18px;background:#f0f0f0;border:1px solid #a8a8a8;box-sizing:border-box"></div>
<div style="left:1318px;top:556px;width:17px;height:18px;background:#f0f0f0;border:1px solid #a8a8a8;box-sizing:border-box"></div>
<div style="left:1335px;top:555px;width:18px;height:19px;background:#cdcdcd"></div>
<div style="left:8px;top:574px;width:1346px;height:1px;background:#585b55"></div>
<div style="left:8px;top:275px;width:1px;height:300px;background:#5a5a55"></div>
<svg style="left:13.8px;top:560.8px" width="5" height="8"><path d="M4.5 0 L0 3.7 L4.5 7.5Z" fill="#000"/></svg>
<svg style="left:1325px;top:561px" width="5" height="8"><path d="M0 0 L4.5 3.5 L0 7Z" fill="#000"/></svg>
<div style="left:188px;top:397px;width:800px;height:293px;background:#52534c"></div>
<div style="left:988px;top:397px;width:1px;height:293px;background:#aeb0aa"></div>
<div style="left:196px;top:423px;width:785px;height:267px;background:#ffffff"></div>
<div style="left:196px;top:423px;width:785px;height:225px;background:#eaebed"></div>
<div style="left:196px;top:648px;width:785px;height:1px;background:#c9c9c9"></div>
<div style="left:197px;top:401.08px;white-space:nowrap;height:18px;line-height:18px;font-size:14.2px;color:#ffffff;text-align:left;white-space:nowrap;overflow:hidden;">Creación palet</div>
<div style="left:220.5px;top:443.19px;white-space:nowrap;height:14px;line-height:14px;font-size:11px;color:#1a1a2a;text-align:left;white-space:nowrap;overflow:hidden;letter-spacing:-0.2px;">Envase</div>
<div style="left:295px;top:443px;width:108px;height:16px;background:#eaebed;border:1px solid #c8c8c6;box-sizing:border-box"></div>
<div style="left:406px;top:443px;width:244px;height:16px;background:#eaebed;border:1px solid #c8c8c6;box-sizing:border-box"></div>
<div style="left:659.5px;top:443.19px;white-space:nowrap;height:14px;line-height:14px;font-size:11px;color:#1a1a2a;text-align:left;white-space:nowrap;overflow:hidden;letter-spacing:-0.2px;">Almacén</div>
<div style="left:721px;top:442px;width:43px;height:16px;background:#eaebed;border:1px solid #c8c8c6;box-sizing:border-box"></div>
<div style="left:723px;top:443.39px;width:38px;height:14px;line-height:14px;font-size:11px;color:#4a4a4a;text-align:left;white-space:nowrap;overflow:hidden;letter-spacing:-0.3px;">FDEX</div>
<div style="left:768px;top:443px;width:211px;height:16px;background:#eaebed;border:1px solid #c8c8c6;box-sizing:border-box"></div>
<div style="left:220.5px;top:474.19px;white-space:nowrap;height:14px;line-height:14px;font-size:11px;color:#1a1a2a;text-align:left;white-space:nowrap;overflow:hidden;letter-spacing:-0.2px;">Confección</div>
<div style="left:295px;top:474px;width:108px;height:16px;background:#eaebed;border:1px solid #c8c8c6;box-sizing:border-box"></div>
<div style="left:297px;top:475.39px;width:103px;height:14px;line-height:14px;font-size:11px;color:#4a4a4a;text-align:left;white-space:nowrap;overflow:hidden;letter-spacing:-0.35px;">CONF000069</div>
<div style="left:406px;top:474px;width:244px;height:16px;background:#eaebed;border:1px solid #c8c8c6;box-sizing:border-box"></div>
<div style="left:408px;top:475.39px;width:239px;height:14px;line-height:14px;font-size:11px;color:#4a4a4a;text-align:left;white-space:nowrap;overflow:hidden;letter-spacing:0px;">Caja Carton 50*30*9.5 Lidiafruit</div>
<div style="left:659.5px;top:474.19px;white-space:nowrap;height:14px;line-height:14px;font-size:11px;color:#1a1a2a;text-align:left;white-space:nowrap;overflow:hidden;letter-spacing:-0.2px;">Fór. conf.</div>
<div style="left:721px;top:474px;width:34px;height:16px;background:#eaebed;border:1px solid #c8c8c6;box-sizing:border-box"></div>
<div style="left:723px;top:475.39px;width:29px;height:14px;line-height:14px;font-size:11px;color:#4a4a4a;text-align:right;white-space:nowrap;overflow:hidden;letter-spacing:0px;">2</div>
<div style="left:763px;top:474px;width:217px;height:16px;background:#eaebed;border:1px solid #c8c8c6;box-sizing:border-box"></div>
<div style="left:765px;top:475.39px;width:212px;height:14px;line-height:14px;font-size:11px;color:#4a4a4a;text-align:left;white-space:nowrap;overflow:hidden;letter-spacing:0px;">Alveolo Plastico IND</div>
<div style="left:220.5px;top:505.19px;white-space:nowrap;height:14px;line-height:14px;font-size:11px;color:#1a1a2a;text-align:left;white-space:nowrap;overflow:hidden;letter-spacing:-0.2px;">Calidad</div>
<div style="left:295px;top:505px;width:64px;height:16px;background:#eaebed;border:1px solid #c8c8c6;box-sizing:border-box"></div>
<div style="left:297px;top:506.39px;width:59px;height:14px;line-height:14px;font-size:11px;color:#4a4a4a;text-align:left;white-space:nowrap;overflow:hidden;letter-spacing:0px;">I CAT</div>
<div style="left:405.5px;top:505.19px;white-space:nowrap;height:14px;line-height:14px;font-size:11px;color:#1a1a2a;text-align:left;white-space:nowrap;overflow:hidden;letter-spacing:-0.2px;">Calibre</div>
<div style="left:480px;top:505px;width:64px;height:16px;background:#eaebed;border:1px solid #c8c8c6;box-sizing:border-box"></div>
<div style="left:482px;top:506.39px;width:59px;height:14px;line-height:14px;font-size:11px;color:#4a4a4a;text-align:left;white-space:nowrap;overflow:hidden;letter-spacing:0px;">26+</div>
<div style="left:220.5px;top:536.19px;white-space:nowrap;height:14px;line-height:14px;font-size:11px;color:#1a1a2a;text-align:left;white-space:nowrap;overflow:hidden;letter-spacing:-0.2px;">Nº cajas</div>
<div style="left:295px;top:536px;width:64px;height:16px;background:#eaebed;border:1px solid #c8c8c6;box-sizing:border-box"></div>
<div style="left:297px;top:537.39px;width:59px;height:14px;line-height:14px;font-size:11px;color:#4a4a4a;text-align:right;white-space:nowrap;overflow:hidden;letter-spacing:0px;">176</div>
<div style="left:405.5px;top:536.19px;white-space:nowrap;height:14px;line-height:14px;font-size:11px;color:#1a1a2a;text-align:left;white-space:nowrap;overflow:hidden;letter-spacing:-0.2px;">Peso unificado</div>
<div style="left:480px;top:536px;width:64px;height:16px;background:#eaebed;border:1px solid #c8c8c6;box-sizing:border-box"></div>
<div style="left:482px;top:537.39px;width:59px;height:14px;line-height:14px;font-size:11px;color:#4a4a4a;text-align:right;white-space:nowrap;overflow:hidden;letter-spacing:0px;">0,000</div>
<div style="left:220.5px;top:567.19px;white-space:nowrap;height:14px;line-height:14px;font-size:11px;color:#1a1a2a;text-align:left;white-space:nowrap;overflow:hidden;letter-spacing:-0.2px;">Peso bruto</div>
<div style="left:295px;top:567px;width:64px;height:16px;background:#eaebed;border:1px solid #c8c8c6;box-sizing:border-box"></div>
<div style="left:297px;top:568.39px;width:59px;height:14px;line-height:14px;font-size:11px;color:#4a4a4a;text-align:right;white-space:nowrap;overflow:hidden;letter-spacing:0px;">788,000</div>
<div style="left:405.5px;top:567.19px;white-space:nowrap;height:14px;line-height:14px;font-size:11px;color:#1a1a2a;text-align:left;white-space:nowrap;overflow:hidden;letter-spacing:-0.2px;">Tara</div>
<div style="left:480px;top:567px;width:64px;height:16px;background:#eaebed;border:1px solid #c8c8c6;box-sizing:border-box"></div>
<div style="left:482px;top:568.39px;width:59px;height:14px;line-height:14px;font-size:11px;color:#4a4a4a;text-align:right;white-space:nowrap;overflow:hidden;letter-spacing:0px;">68,64</div>
<div style="left:594.5px;top:567.19px;white-space:nowrap;height:14px;line-height:14px;font-size:11px;color:#1a1a2a;text-align:left;white-space:nowrap;overflow:hidden;letter-spacing:-0.2px;">Peso neto</div>
<div style="left:663px;top:567px;width:64px;height:16px;background:#eaebed;border:1px solid #c8c8c6;box-sizing:border-box"></div>
<div style="left:665px;top:568.39px;width:59px;height:14px;line-height:14px;font-size:11px;color:#4a4a4a;text-align:right;white-space:nowrap;overflow:hidden;letter-spacing:0px;">0,000</div>
<div style="left:220.5px;top:598.19px;white-space:nowrap;height:14px;line-height:14px;font-size:11px;color:#1a1a2a;text-align:left;white-space:nowrap;overflow:hidden;letter-spacing:-0.2px;">Observaciones palet</div>
<div style="left:221px;top:629px;width:754px;height:16px;background:#eaebed;border:1px solid #c8c8c6;box-sizing:border-box"></div>
<div style="left:223px;top:630.39px;width:749px;height:14px;line-height:14px;font-size:11px;color:#4a4a4a;text-align:left;white-space:nowrap;overflow:hidden;letter-spacing:0px;">*compra frutove</div>
<div style="left:800px;top:657px;width:75px;height:23px;background:#e1e1df"></div>
<div style="left:800px;top:662.19px;width:75px;height:14px;line-height:14px;font-size:11px;color:#7a7a7a;text-align:center;white-space:nowrap;overflow:hidden;letter-spacing:0px;">Aceptar</div>
<div style="left:887px;top:657px;width:75px;height:23px;background:#03a6d3"></div>
<div style="left:887px;top:662.19px;width:75px;height:14px;line-height:14px;font-size:11px;color:#ffffff;text-align:center;white-space:nowrap;overflow:hidden;letter-spacing:0px;">Cancelar</div>
<svg style="left:0;top:0" width="1365" height="690" viewBox="0 0 1365 690"><path d="M26.65 58.65 H33.8 L37.35 62.2 V71.35 H26.65 Z" fill="#fff" stroke="#404040" stroke-width="1.3"/><path d="M33.5 58 H34.2 L38 61.8 V62.6 H33.5 Z" fill="#404040"/><path d="M47.8 58.8 L61.4 71.6 M61.4 58.8 L47.8 71.6" stroke="#d83b01" stroke-width="2"/><path d="M78 65.2 L82 69.3 L90.3 60" fill="none" stroke="#1f9634" stroke-width="2.7"/><path d="M100.7 60.4 A6.8 6.8 0 1 1 99.2 66" fill="none" stroke="#1f74e0" stroke-width="1.6"/><path d="M98 57 L98 63 L104.2 63 Z" fill="#1f74e0"/><rect x="128" y="57" width="3" height="16" fill="#4b4c50"/><path d="M144 57 L133 65 L144 73 Z" fill="#4b4c50"/><path d="M163 57 L152 65 L163 73 Z" fill="#4b4c50"/><path d="M175 57 L186 65 L175 73 Z" fill="#4b4c50"/><path d="M194 57 L205 65 L194 73 Z" fill="#4b4c50"/><rect x="207" y="57" width="3" height="16" fill="#4b4c50"/><path d="M225.4 62.7 L227.4 57.4 L229.4 62.7 M226.1 61 H228.7" fill="none" stroke="#2064d8" stroke-width="1.1"/><path d="M225.3 66.6 H229.5 L225.5 71.4 H229.7" fill="none" stroke="#ff9800" stroke-width="1.3"/><path d="M236.5 60.5 V70.5 M233.9 63 L236.5 60.4 L239.1 63 M233.9 68 L236.5 70.6 L239.1 68" fill="none" stroke="#505050" stroke-width="1.2"/><circle cx="283.3" cy="64.2" r="5.4" fill="none" stroke="#404040" stroke-width="1.5"/><path d="M287.2 68.1 L291 71.9" stroke="#404040" stroke-width="1.7"/><path d="M26.65 254.65 H33.8 L37.35 258.2 V267.35 H26.65 Z" fill="#fff" stroke="#9a9a9a" stroke-width="1.3"/><path d="M33.5 254 H34.2 L38 257.8 V258.6 H33.5 Z" fill="#9a9a9a"/><path d="M48.2 255.2 L61 268 M61 255.2 L48.2 268" stroke="#9a9a9a" stroke-width="2.6"/><path d="M78 261.2 L82 265.3 L90.3 256" fill="none" stroke="#9a9a9a" stroke-width="2.7"/><path d="M100.7 256.4 A6.8 6.8 0 1 1 99.2 262" fill="none" stroke="#9a9a9a" stroke-width="1.6"/><path d="M98 253 L98 259 L104.2 259 Z" fill="#9a9a9a"/><rect x="128" y="253" width="3" height="16" fill="#4b4c50"/><path d="M144 253 L133 261 L144 269 Z" fill="#4b4c50"/><path d="M163 253 L152 261 L163 269 Z" fill="#4b4c50"/><path d="M175 253 L186 261 L175 269 Z" fill="#4b4c50"/><path d="M194 253 L205 261 L194 269 Z" fill="#4b4c50"/><rect x="207" y="253" width="3" height="16" fill="#4b4c50"/><path d="M225.4 258.7 L227.4 253.4 L229.4 258.7 M226.1 257 H228.7" fill="none" stroke="#2064d8" stroke-width="1.1"/><path d="M225.3 262.6 H229.5 L225.5 267.4 H229.7" fill="none" stroke="#ff9800" stroke-width="1.3"/><path d="M236.5 256.5 V266.5 M233.9 259 L236.5 256.4 L239.1 259 M233.9 264 L236.5 266.6 L239.1 264" fill="none" stroke="#505050" stroke-width="1.2"/><circle cx="283.90000000000003" cy="260.2" r="5.4" fill="none" stroke="#404040" stroke-width="1.5"/><path d="M287.8 264.1 L291.6 267.9" stroke="#404040" stroke-width="1.7"/></svg>
<svg style="left:0;top:0" width="1365" height="690" viewBox="0 0 1365 690"><path d="M247 58 H261 L247 72 Z" fill="#ffc75a"/><path d="M261 58 L247 72" stroke="#ff3fa0" stroke-width="0.9"/><path d="M248.6 59.5 H252.3 V64 H248.6 V61.8 H252" fill="none" stroke="#3a3a3a" stroke-width="1.2"/><rect x="254" y="65" width="7" height="7" fill="#fff"/><path d="M255 66.2 H259.5 L255 70.8 H259.8" fill="none" stroke="#1f5fd0" stroke-width="1.4"/><path d="M299.5 58.5 H312.5 V60.2 L307.3 65.8 V71.5 H304.7 V65.8 L299.5 60.2 Z" fill="#b4b4b4" stroke="#404040" stroke-width="1" stroke-linejoin="round"/><path d="M321.5 58.5 H334.5 V60.2 L329.3 65.8 V71.5 H326.7 V65.8 L321.5 60.2 Z" fill="#b4b4b4" stroke="#404040" stroke-width="1" stroke-linejoin="round"/><path d="M329.5 66.5 L335.5 72.5 M335.5 66.5 L329.5 72.5" stroke="#cc3300" stroke-width="1.8"/><rect x="350.6" y="57.6" width="14.8" height="14.8" fill="#fff" stroke="#404040" stroke-width="1.2"/><rect x="350" y="57" width="16" height="4" fill="#404040"/><path d="M351 65.5 H365 M351 69 H365 M355 61 V72" stroke="#b8b8b8" stroke-width="1"/><path d="M383.5 57.5 H390 L392.5 60 V63 H383.5 Z" fill="#fff" stroke="#404040" stroke-width="1.1"/><rect x="380" y="62" width="16" height="7" rx="1" fill="#404040"/><rect x="393" y="63.5" width="2" height="2" fill="#fff"/><rect x="383.5" y="66.5" width="9" height="6" fill="#fff" stroke="#404040" stroke-width="1.1"/><path d="M385 68.5 H389 M385 70.7 H391" stroke="#22b14c" stroke-width="1.1"/><ellipse cx="418.6" cy="62.2" rx="3.6" ry="4.3" fill="#48494c"/><path d="M411 72.7 C411 68.5 413.5 67.2 416 66.8 L421.2 66.8 C423.7 67.2 426.3 68.5 426.3 72.7 Z" fill="#48494c"/><rect x="463" y="58" width="7" height="5" fill="#16a34a"/><path d="M466.5 58.8 V62.2 M464.8 60.5 H468.2" stroke="#fff" stroke-width="1"/><path d="M465.5 63 V70 M465.5 64 H470 M465.5 70 H470" fill="none" stroke="#404040" stroke-width="1"/><rect x="470" y="62" width="7" height="4" fill="#404040"/><rect x="470" y="68" width="7" height="4" fill="#404040"/><path d="M445.2 59.6 A5.6 6.3 0 1 0 445.2 70.6" fill="none" stroke="#48494c" stroke-width="2.6"/><path d="M433 63.6 H441.5 M433 67.4 H441" stroke="#48494c" stroke-width="1.6"/></svg>
<svg style="left:0;top:0" width="1365" height="690" viewBox="0 0 1365 690"><path d="M247 254 H261 L247 268 Z" fill="#9a9a9a"/><path d="M261 254 L247 268" stroke="#ffffff" stroke-width="1"/><path d="M255.2 262.3 H259.6 L255.2 266.8 H259.8" fill="none" stroke="#8a8a8a" stroke-width="1.3"/><rect x="295" y="250" width="21.5" height="22" fill="#0ae3f3"/><rect x="298.6" y="253.6" width="14.8" height="14.8" fill="#fff" stroke="#404040" stroke-width="1.2"/><rect x="298" y="253" width="16" height="4" fill="#404040"/><path d="M299 261.5 H313 M299 265 H313 M303 257 V268" stroke="#b8b8b8" stroke-width="1"/><path d="M330 254 V266.8 H338" fill="none" stroke="#3c3c40" stroke-width="2.2"/><rect x="360.5" y="255" width="11" height="13.5" rx="1.5" fill="#fff" stroke="#f39a0b" stroke-width="1.2"/><path d="M363.3 256.8 V255.2 C363.3 254 364.5 253.2 366 253.2 C367.5 253.2 368.7 254 368.7 255.2 V256.8 Z" fill="#3a3a3a"/><path d="M363.2 259.2 H368.8 M363.2 261.2 H368.8 M363.2 263.2 H368.8 M363.2 265.2 H367.2" stroke="#3a3a3a" stroke-width="0.9"/><rect x="385" y="250" width="22" height="22" fill="#00e4f4"/><path d="M388.5 268.8 H393.5" stroke="#505050" stroke-width="1.2"/><path d="M395.5 267.8 L396.2 264 L402.5 255.5 L404.6 257.2 L398.3 265.6 Z" fill="#f5a623" stroke="#505050" stroke-width="0.8"/></svg>
<div style="left:331.4px;top:247.45px;white-space:nowrap;height:18px;line-height:18px;font-size:14px;color:#00c050;text-align:left;white-space:nowrap;overflow:hidden;letter-spacing:-0.5px;font-weight:bold">re</div>
<svg style="left:0;top:0" width="1365" height="690" viewBox="0 0 1365 690"><g transform="translate(307.4,-396.7)" fill="#fff"><rect x="915.6" y="406.2" width="4.6" height="5.6"/><path d="M920.6 405.9 L929.8 403.8 V414.1 L920.6 412 Z"/><rect x="930.7" y="407.4" width="1.5" height="2.7" rx="0.7"/><path d="M917.4 412 H920.6 V416.2 H921.4 V418 H917.4 Z"/></g><path d="M1244 13.6 L1250 12.8 V14.9 L1245 14.5 Z" fill="#fff"/><path d="M1249.9 8 L1252.2 9.2 H1260.9 V18 H1252.2 L1249.9 18.9 Z" fill="#fff"/><rect x="1254.2" y="11.8" width="4.8" height="1.3" fill="#a6a7a2"/><path d="M1271.6 11.3 C1271.6 8.4 1277.7 8.2 1277.7 11.4 C1277.7 13.7 1274.8 14 1274.8 16.6" fill="none" stroke="#fff" stroke-width="1.5"/><rect x="1274" y="17.8" width="1.7" height="2" fill="#fff"/><rect x="1292" y="13.7" width="10" height="1.5" fill="#fff"/><rect x="1314.6" y="9.6" width="9" height="9" fill="none" stroke="#fff" stroke-width="1.2"/><path d="M1336.3 9.3 L1346 19 M1346 9.3 L1336.3 19" stroke="#fff" stroke-width="1.6"/><rect x="1304" y="209.6" width="10" height="1.6" fill="#fff"/><rect x="1326.6" y="205.5" width="9" height="9" fill="none" stroke="#fff" stroke-width="1.2"/><g transform="translate(0,0)" fill="#fff"><rect x="915.6" y="406.2" width="4.6" height="5.6"/><path d="M920.6 405.9 L929.8 403.8 V414.1 L920.6 412 Z"/><rect x="930.7" y="407.4" width="1.5" height="2.7" rx="0.7"/><path d="M917.4 412 H920.6 V416.2 H921.4 V418 H917.4 Z"/></g><path d="M942.6 407.8 C942.6 404.6 948.4 404.4 948.4 408 C948.4 410.6 945.5 410.9 945.5 413.6" fill="none" stroke="#fff" stroke-width="1.9"/><rect x="944.5" y="414.6" width="2.1" height="2.3" fill="#fff"/><path d="M963.6 406.6 L972.4 415.3 M972.4 406.6 L963.6 415.3" stroke="#fff" stroke-width="2.2"/><rect x="1343.5" y="431" width="6.5" height="11.7" fill="#fff" stroke="#107c41" stroke-width="1.1"/><path d="M1345 433.7 H1349 M1345 435.6 H1349 M1345 438.5 H1349 M1345 440.4 H1349" stroke="#107c41" stroke-width="1.1"/><path d="M1335.8 430.8 L1342 430 L1344 430.6 V443.6 L1342 444 L1335.8 443.2 Z" fill="#107c41"/><path d="M1338.3 434 L1341.6 439.8 M1341.6 434 L1338.3 439.8" stroke="#fff" stroke-width="1.5"/><rect x="1341" y="453.8" width="7.4" height="1.2" fill="#000"/><path d="M1341 460 L1344.7 455.8 L1348.4 460 Z" fill="#000"/><path d="M1341 476.4 L1344.7 472.2 L1348.4 476.4 Z" fill="#000"/><rect x="1341" y="477.6" width="7.4" height="1.2" fill="#000"/><path d="M1341 495.1 L1344.7 490.8 L1348.4 495.1 Z" fill="#000"/><path d="M1341 509 L1344.7 513.2 L1348.4 509 Z" fill="#000"/><rect x="1341" y="525.6" width="7.4" height="1.2" fill="#000"/><path d="M1341 527.4 L1344.7 531.6 L1348.4 527.4 Z" fill="#000"/><path d="M1341 543.7 L1344.7 547.9 L1348.4 543.7 Z" fill="#000"/><rect x="1341" y="549" width="7.4" height="1.2" fill="#000"/></svg>
</body></html>
